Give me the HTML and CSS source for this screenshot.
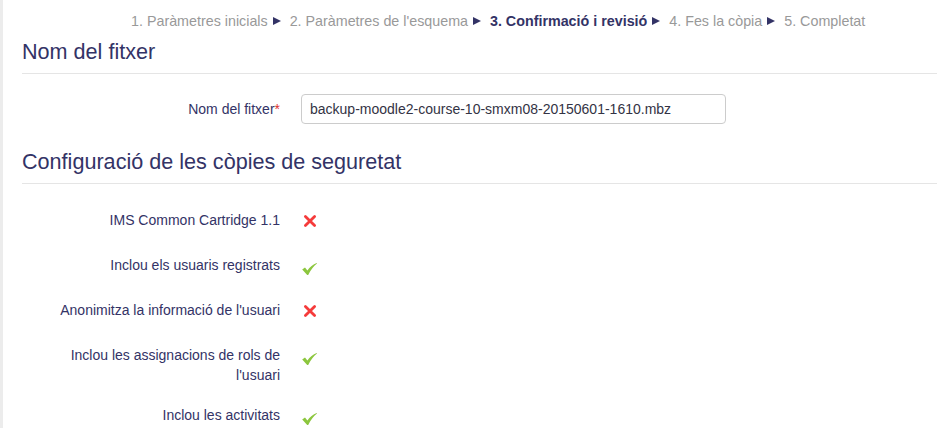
FILE: index.html
```html
<!DOCTYPE html>
<html lang="ca">
<head>
<meta charset="utf-8">
<title>Confirmació i revisió</title>
<link rel="stylesheet" href="styles.css">
</head>
<body>
<div class="page">
  <div class="steps">
    <span class="step">1. Paràmetres inicials</span>
    <span class="arrow"></span>
    <span class="step">2. Paràmetres de l'esquema</span>
    <span class="arrow"></span>
    <span class="step current">3. Confirmació i revisió</span>
    <span class="arrow"></span>
    <span class="step">4. Fes la còpia</span>
    <span class="arrow"></span>
    <span class="step">5. Completat</span>
  </div>

  <h3 class="section-title">Nom del fitxer</h3>
  <div class="form-grid form-file">
    <label class="label" for="fname">Nom del fitxer<span class="req">*</span></label>
    <input id="fname" class="text-input" type="text" value="backup-moodle2-course-10-smxm08-20150601-1610.mbz">
  </div>

  <h3 class="section-title">Configuració de les còpies de seguretat</h3>
  <div class="form-grid settings">
    <div class="label">IMS Common Cartridge 1.1</div>
    <div class="value"><svg class="icon cross" width="14" height="14" viewBox="0 0 14 14"><path d="M2.4 2.4 L11.6 11.6 M11.6 2.4 L2.4 11.6" stroke="#f53b3b" stroke-width="2.8" stroke-linecap="round" fill="none"/></svg></div>

    <div class="label">Inclou els usuaris registrats</div>
    <div class="value"><svg class="icon check" width="15" height="12" viewBox="0 0 15 12"><path d="M0.2 6.4 L3 4.6 L5.4 7.4 C7.8 4.2 11 1.4 14.8 0 L15 0.6 C11.4 3.4 8.6 7 6.2 12 L5.2 12 Z" fill="#8cc63e"/></svg></div>

    <div class="label">Anonimitza la informació de l'usuari</div>
    <div class="value"><svg class="icon cross" width="14" height="14" viewBox="0 0 14 14"><path d="M2.4 2.4 L11.6 11.6 M11.6 2.4 L2.4 11.6" stroke="#f53b3b" stroke-width="2.8" stroke-linecap="round" fill="none"/></svg></div>

    <div class="label">Inclou les assignacions de rols de l'usuari</div>
    <div class="value"><svg class="icon check" width="15" height="12" viewBox="0 0 15 12"><path d="M0.2 6.4 L3 4.6 L5.4 7.4 C7.8 4.2 11 1.4 14.8 0 L15 0.6 C11.4 3.4 8.6 7 6.2 12 L5.2 12 Z" fill="#8cc63e"/></svg></div>

    <div class="label">Inclou les activitats</div>
    <div class="value"><svg class="icon check" width="15" height="12" viewBox="0 0 15 12"><path d="M0.2 6.4 L3 4.6 L5.4 7.4 C7.8 4.2 11 1.4 14.8 0 L15 0.6 C11.4 3.4 8.6 7 6.2 12 L5.2 12 Z" fill="#8cc63e"/></svg></div>
  </div>
</div>
</body>
</html>
```
FILE: styles.css
```css
html, body {
  margin: 0;
  padding: 0;
  background: #ffffff;
}
body {
  font-family: "Liberation Sans", Arial, sans-serif;
  font-size: 14px;
  line-height: 20px;
  color: #333366;
  border-left: 3px solid #ececec;
  min-height: 428px;
  box-sizing: border-box;
}
.page {
  padding: 0 1px 0 19px;
}
.steps {
  padding: 11px 0 8px 109px;
  font-size: 14.3px;
  line-height: 20px;
  white-space: nowrap;
}
.step {
  color: #999999;
}
.step.current {
  color: #333366;
  font-weight: bold;
}
.arrow {
  display: inline-block;
  width: 0;
  height: 0;
  border-left: 8px solid #333366;
  border-top: 4.5px solid transparent;
  border-bottom: 4.5px solid transparent;
  vertical-align: 1px;
  margin: 0 5px 0 1px;
}
.section-title {
  margin: 0;
  font-size: 21.6px;
  line-height: 26px;
  font-weight: normal;
  padding-bottom: 8px;
  border-bottom: 1px solid #e5e5e5;
}
.form-grid {
  display: grid;
  grid-template-columns: 240px 1fr;
  column-gap: 21px;
  padding-left: 18px;
}
.form-file {
  padding-top: 20px;
  padding-bottom: 25px;
  align-items: start;
}
.label {
  text-align: right;
  padding-top: 5px;
  line-height: 20px;
}
.req {
  color: #e0302e;
}
.text-input {
  width: 425px;
  height: 30px;
  box-sizing: border-box;
  border: 1px solid #cccccc;
  border-radius: 4px;
  padding: 0 8px;
  font-family: "Liberation Sans", Arial, sans-serif;
  font-size: 14px;
  color: #333344;
  background: #fff;
}
.settings {
  padding-top: 21px;
  row-gap: 15px;
  align-items: start;
}
.value {
  height: 30px;
}
.icon {
  display: block;
}
.icon.cross {
  margin: 9px 0 0 2px;
}
.icon.check {
  margin: 13px 0 0 1px;
}
```
